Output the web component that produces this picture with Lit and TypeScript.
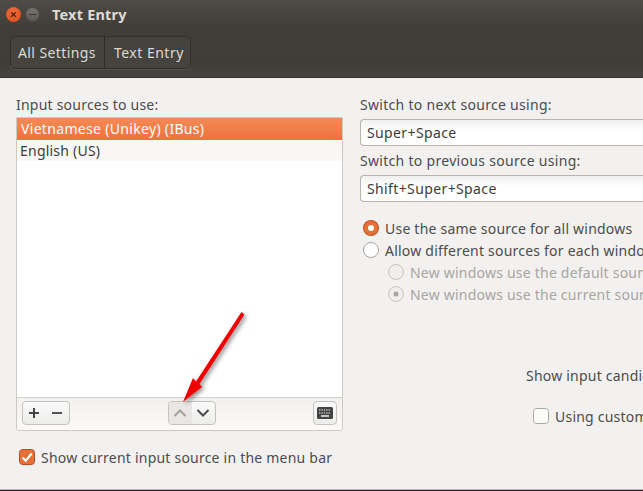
import { LitElement, html, css, svg } from "lit";
import { customElement } from "lit/decorators.js";

@customElement("app-root")
export class AppRoot extends LitElement {
  static styles = css`
    :host { display: block; width: 643px; height: 491px; overflow: hidden; background: #f2f1f0; position: relative;
      font-family: "Noto Sans", "Open Sans", sans-serif; font-size: 14px; color: #4c4c4c; letter-spacing: 0.22px; }
    * { box-sizing: border-box; }
    .titlebar { height: 28px; display: flex; align-items: center; padding: 0 0 0 6px; background: linear-gradient(#4f4c46, #403e39); }
    .close { width: 15px; height: 15px; border-radius: 50%; background: radial-gradient(circle at 50% 35%, #f0703c, #d9481c); display: flex; align-items: center; justify-content: center; }
    .min { width: 15px; height: 15px; border-radius: 50%; margin-left: 4px; background: linear-gradient(#75736e, #5b5955); border: 1px solid #4a4843; display: flex; align-items: center; justify-content: center; }
    .min i { width: 7px; height: 1px; background: #3b3a36; display: block; }
    .title { margin-left: 12px; font-weight: 700; color: #dfdbd2; font-size: 14.5px; letter-spacing: 0.2px; }
    .toolbar { height: 50px; padding: 8px 0 0 10px; background: linear-gradient(#403e39, #3f3d38 70%, #46443f); border-bottom: 1px solid #33312d; }
    .crumbs { display: inline-flex; height: 33px; border: 1px solid #2f2e2a; border-radius: 5px; background: #45433e; color: #dfdbd2; box-shadow: 0 1px 0 #55534d; letter-spacing: 0.4px; }
    .crumbs span { display: flex; align-items: center; padding: 0 8px 1px 7px; }
    .crumbs span + span { border-left: 1px solid #2c2b27; padding: 0 6px 1px 9px; letter-spacing: 0.5px; }
    .main { display: flex; height: 411px; padding: 17px 0 0 16px; }
    .left { width: 327px; flex: none; }
    .lbl { height: 20px; line-height: 20px; white-space: nowrap; }
    .panel { margin-top: 2px; height: 314px; border: 1px solid #cdc9c5; background: #fff; display: flex; flex-direction: column; border-radius: 0 0 3px 3px; }
    .list { flex: 1; }
    .row { height: 21px; line-height: 21px; padding-left: 3px; background: #f8f7f6; color: #3c3c3c; }
    .row.sel { height: 22px; line-height: 22px; background: linear-gradient(#f58a54, #ee7240); color: #fff; padding-left: 4px; letter-spacing: 0.32px; }
    .tb { height: 33px; border-top: 1px solid #d4d1cd; background: linear-gradient(#f2f1f0, #fbfaf9); padding: 3px 5px 0; display: flex; justify-content: space-between; border-radius: 0 0 3px 3px; }
    .grp { height: 24px; display: flex; border: 1px solid #c6c2bd; border-radius: 4px; background: linear-gradient(#fafafa, #ececea); overflow: hidden; }
    .grp span { display: flex; align-items: center; justify-content: center; width: 23px; }
    .grp span.first { width: 22px; }
    .grp span.second { width: 24px; }
    .grp span.off { background: #e8e7e5; }
    .grp.kb { width: 24px; }
    .grp.kb span { width: 100%; }
    .show { display: flex; align-items: center; margin: 16px 0 0 3px; gap: 6px; height: 20px; white-space: nowrap; }
    .cb { width: 16px; height: 16px; border-radius: 3px; flex: none; display: block; }
    .right { margin-left: 17px; flex: 1; min-width: 0; overflow: hidden; white-space: nowrap; }
    .right .lbl { letter-spacing: 0.3px; }
    .entry { height: 27px; width: 300px; margin-top: 4px; border: 1px solid #b8b4af; border-radius: 4px 0 0 4px; border-right: none; background: linear-gradient(#f0efee, #fff 40%); color: #3c3c3c; line-height: 25px; padding-left: 6px; letter-spacing: 0.38px; }
    .lbl2 { margin-top: 5px; }
    .opts { margin-top: 15px; }
    .radio { height: 22px; display: flex; align-items: center; gap: 6px; color: #4c4c4c; }
    .radio.sub { margin-left: 28px; gap: 6px; color: #a8a5a2; }
    .radio svg { flex: none; margin-left: 3px; }
    .radio.sub svg { margin-left: 0; }
    .cand { margin: 61px 0 0 166px; height: 20px; line-height: 20px; }
    .custom { display: flex; align-items: center; gap: 6px; margin: 20px 0 0 173px; height: 20px; }
    .arrow { position: absolute; left: 160px; top: 300px; pointer-events: none; }
    .foot { position: absolute; left: 0; right: 0; bottom: 0; height: 2px; background: linear-gradient(#b9b7b5 50%, #3c0f33 50%); }
  `;

  radio(state: "on" | "off" | "dis" | "dismark") {
    if (state === "on") return svg`<svg width="16" height="16" viewBox="0 0 16 16"><circle cx="8" cy="8" r="8" fill="#c4511f"/><circle cx="8" cy="8" r="7" fill="#e5703a"/><circle cx="8" cy="8" r="3" fill="#fff"/></svg>`;
    if (state === "off") return svg`<svg width="16" height="16" viewBox="0 0 16 16"><circle cx="8" cy="8" r="7.5" fill="#fff" stroke="#a6a39f"/></svg>`;
    const mark = state === "dismark" ? svg`<circle cx="8" cy="8" r="2.5" fill="#a8a5a2"/>` : "";
    return svg`<svg width="16" height="16" viewBox="0 0 16 16"><circle cx="8" cy="8" r="7.5" fill="#efeeed" stroke="#c8c5c2"/>${mark}</svg>`;
  }

  render() {
    return html`
      <div class="titlebar">
        <div class="close"><svg width="7" height="7" viewBox="0 0 7 7"><path d="M1.2 1.2 5.8 5.8M5.8 1.2 1.2 5.8" stroke="#5a1c08" stroke-width="1.3"/></svg></div>
        <div class="min"><i></i></div>
        <div class="title">Text Entry</div>
      </div>
      <div class="toolbar"><div class="crumbs"><span>All Settings</span><span>Text Entry</span></div></div>
      <div class="main">
        <div class="left">
          <div class="lbl">Input sources to use:</div>
          <div class="panel">
            <div class="list">
              <div class="row sel">Vietnamese (Unikey) (IBus)</div>
              <div class="row">English (US)</div>
            </div>
            <div class="tb">
              <div class="grp">
                <span class="first"><svg width="12" height="12" viewBox="0 0 12 12"><path d="M6 1v10M1 6h10" stroke="#444" stroke-width="2"/></svg></span>
                <span class="second"><svg width="12" height="12" viewBox="0 0 12 12"><path d="M1 6h10" stroke="#555" stroke-width="2"/></svg></span>
              </div>
              <div class="grp">
                <span class="off"><svg width="14" height="10" viewBox="0 0 14 10"><path d="M1.5 8 7 2.5 12.5 8" fill="none" stroke="#a3a19e" stroke-width="2"/></svg></span>
                <span><svg width="14" height="10" viewBox="0 0 14 10"><path d="M1.5 2 7 7.5 12.5 2" fill="none" stroke="#4c4c4c" stroke-width="2"/></svg></span>
              </div>
              <div class="grp kb"><span><svg width="16" height="12" viewBox="0 0 16 12"><rect width="16" height="12" rx="1.5" fill="#444"/><path d="M2 3h12M2 6h12" stroke="#eee" stroke-width="1.2" stroke-dasharray="1.4 1"/><path d="M4 9h8" stroke="#eee" stroke-width="1.4"/></svg></span></div>
            </div>
          </div>
          <label class="show">
            <svg class="cb" viewBox="0 0 16 16"><rect x=".5" y=".5" width="15" height="15" rx="3" fill="#e5703a" stroke="#b84f20"/><path d="M3.5 8.5 6.7 11.7 12.7 4.5" fill="none" stroke="#fff" stroke-width="2.2"/></svg>
            Show current input source in the menu bar
          </label>
        </div>
        <div class="right">
          <div class="lbl">Switch to next source using:</div>
          <div class="entry">Super+Space</div>
          <div class="lbl lbl2">Switch to previous source using:</div>
          <div class="entry">Shift+Super+Space</div>
          <div class="opts">
            <div class="radio">${this.radio("on")}Use the same source for all windows</div>
            <div class="radio">${this.radio("off")}Allow different sources for each window</div>
            <div class="radio sub">${this.radio("dis")}New windows use the default source</div>
            <div class="radio sub">${this.radio("dismark")}New windows use the current source</div>
          </div>
          <div class="cand">Show input candidates:</div>
          <div class="custom">
            <svg class="cb" viewBox="0 0 16 16"><rect x=".5" y=".5" width="15" height="15" rx="3" fill="#fbfbfa" stroke="#aaa7a3"/></svg>
            Using custom font
          </div>
        </div>
      </div>
      <div class="foot"></div>
      <svg class="arrow" width="100" height="110" viewBox="160 300 100 110">
        <defs><filter id="s" x="-30%" y="-30%" width="160%" height="160%"><feDropShadow dx="2" dy="2" stdDeviation="2" flood-color="#000" flood-opacity=".45"/></filter></defs>
        <path d="M241.5 312 244.5 314.5 199.5 384 202 387 183 402 193 378 196 381.5Z" fill="#f00506" filter="url(#s)"/>
      </svg>
    `;
  }
}
